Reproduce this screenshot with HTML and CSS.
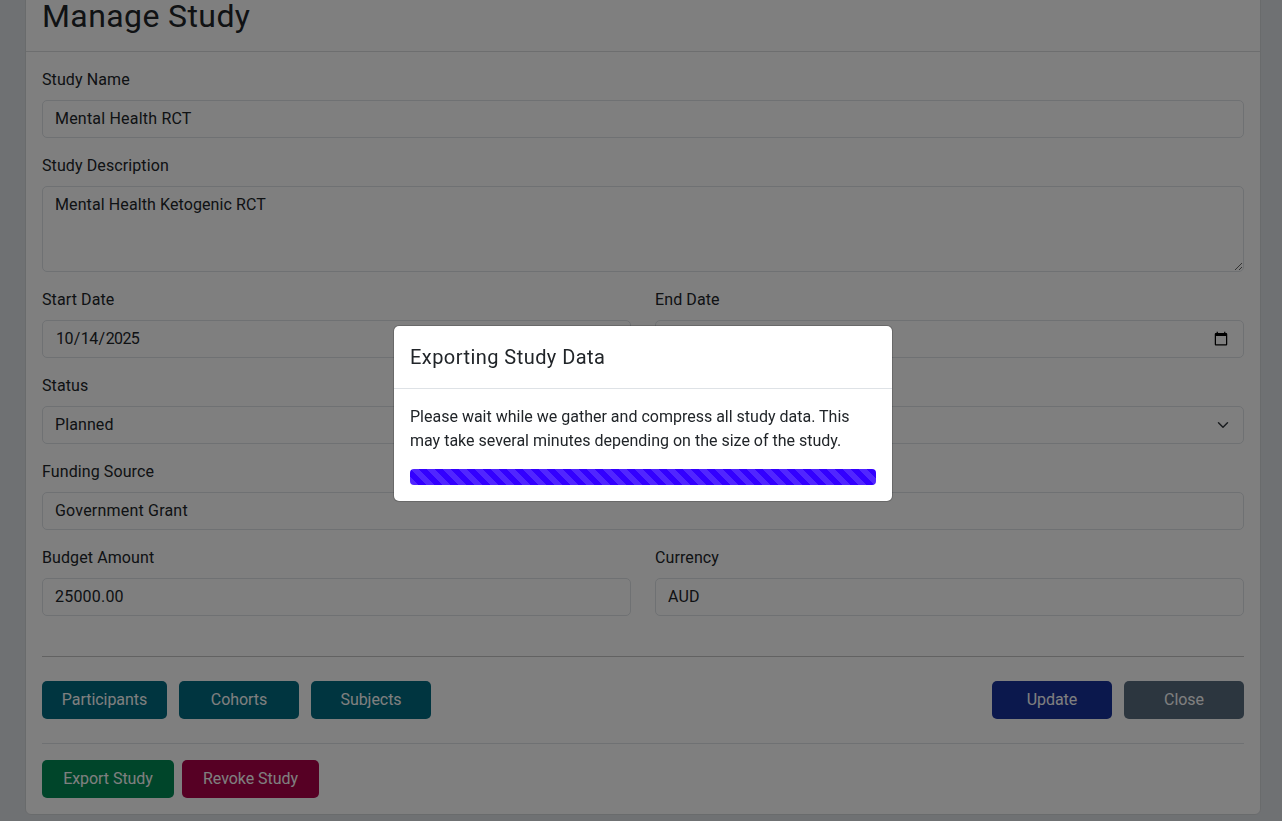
FILE: index.html
```html
<!DOCTYPE html>
<html lang="en">
<head>
<meta charset="utf-8">
<title>Manage Study</title>
<link rel="stylesheet" href="styles.css">
</head>
<body>
<main class="page">
  <section class="card">
    <header class="card-header"><h2>Manage Study</h2></header>
    <div class="card-body">
      <form class="fields">
        <div class="field"><label>Study Name</label><input type="text" value="Mental Health RCT"></div>
        <div class="field"><label>Study Description</label><textarea>Mental Health Ketogenic RCT</textarea></div>
        <div class="two">
          <div class="field"><label>Start Date</label><input type="date" value="2025-10-14"></div>
          <div class="field"><label>End Date</label><input type="date"></div>
        </div>
        <div class="field"><label>Status</label><select><option>Planned</option></select></div>
        <div class="field"><label>Funding Source</label><input type="text" value="Government Grant"></div>
        <div class="two">
          <div class="field"><label>Budget Amount</label><input type="text" value="25000.00"></div>
          <div class="field"><label>Currency</label><input type="text" value="AUD"></div>
        </div>
      </form>
      <hr class="rule">
      <div class="actions">
        <div class="group">
          <button class="btn teal w-125">Participants</button>
          <button class="btn teal">Cohorts</button>
          <button class="btn teal">Subjects</button>
        </div>
        <div class="group">
          <button class="btn blue">Update</button>
          <button class="btn slate">Close</button>
        </div>
      </div>
      <div class="danger-row">
        <button class="btn green w-132">Export Study</button>
        <button class="btn red w-137">Revoke Study</button>
      </div>
    </div>
  </section>
</main>
<div class="backdrop">
  <div class="modal">
    <div class="modal-header"><h5>Exporting Study Data</h5></div>
    <div class="modal-body">
      <p>Please wait while we gather and compress all study data. This may take several minutes depending on the size of the study.</p>
      <div class="progress"></div>
    </div>
  </div>
</div>
</body>
</html>
```
FILE: styles.css
```css
* { box-sizing: border-box; }
html, body { height: 100%; overflow: hidden; }
body {
  margin: 0;
  background: #dee2e6;
  color: #212529;
  font-family: Roboto, sans-serif;
  font-size: 16px;
  line-height: 24px;
}
.page { padding: 0 21px 0 25px; margin-top: -22px; }
.card {
  background: #fff;
  border: 1px solid #d3d6d9;
  border-radius: 6px;
}
.card-header {
  padding: 18px 16px 0;
  border-bottom: 1px solid #dadcdf;
  height: 73px;
}
h2 { margin: 0; font-size: 32px; line-height: 38px; font-weight: 400; letter-spacing: .4px; }
.card-body { padding: 16px; }
.fields { display: flex; flex-direction: column; gap: 16px; }
.field { display: flex; flex-direction: column; gap: 8px; min-width: 0; }
.two { display: grid; grid-template-columns: 1fr 1fr; gap: 24px; }
label { display: block; letter-spacing: .1px; }
input, textarea, select {
  display: block;
  width: 100%;
  height: 38px;
  padding: 6px 12px;
  border: 1px solid #dee2e6;
  border-radius: 5px;
  background: #fff;
  color: #212529;
  font: inherit;
  letter-spacing: .1px;
}
input[type="text"] { padding: 5px 12px 7px; letter-spacing: .2px; }
input[type="date"] { letter-spacing: -.6px; }
textarea { height: 86px; resize: vertical; }
select {
  appearance: none;
  padding-right: 36px;
  background-image: url("data:image/svg+xml,%3csvg xmlns='http://www.w3.org/2000/svg' viewBox='0 0 16 16'%3e%3cpath fill='none' stroke='%23343a40' stroke-linecap='round' stroke-linejoin='round' stroke-width='2' d='m2 5 6 6 6-6'/%3e%3c/svg%3e");
  background-repeat: no-repeat;
  background-position: right 12px center;
  background-size: 16px 12px;
}
.rule { margin: 40px 0 24px; border: 0; border-top: 1px solid #c4c4c4; }
.actions { display: flex; justify-content: space-between; }
.group { display: flex; gap: 12px; }
.btn {
  width: 120px;
  height: 38px;
  padding: 6px 0;
  border: 1px solid transparent;
  border-radius: 5px;
  color: #fff;
  font: inherit;
  font-weight: 400;
  letter-spacing: -.05px;
}
.w-125 { width: 125px; }
.w-132 { width: 132px; }
.w-137 { width: 137px; }
.teal { background: #006a80; }
.blue { background: #16309a; }
.slate { background: #586c7e; }
.green { background: #008a55; }
.red { background: #ac0048; }
.danger-row {
  display: flex;
  gap: 8px;
  margin-top: 24px;
  padding-top: 16px;
  border-top: 1px solid #dee2e6;
}
.backdrop {
  position: fixed;
  inset: 0;
  display: flex;
  align-items: center;
  justify-content: center;
  padding: 6px 0 0 4px;
  background: rgba(0, 0, 0, .5);
}
.modal {
  width: 500px;
  background: #fff;
  border: 1px solid rgba(0, 0, 0, .175);
  background-clip: padding-box;
  border-radius: 6px;
}
.modal-header { padding: 16px; border-bottom: 1px solid #dee2e6; }
h5 { margin: 0; font-size: 20px; line-height: 30px; font-weight: 400; letter-spacing: .45px; }
.modal-body { padding: 16px; }
.modal-body p { margin: 0 0 16px; }
.progress {
  height: 16px;
  border-radius: 4px;
  background-color: #3300ff;
  background-image: linear-gradient(45deg, rgba(255,255,255,.15) 25%, transparent 25%, transparent 50%, rgba(255,255,255,.15) 50%, rgba(255,255,255,.15) 75%, transparent 75%, transparent);
  background-size: 16px 16px;
}
```
